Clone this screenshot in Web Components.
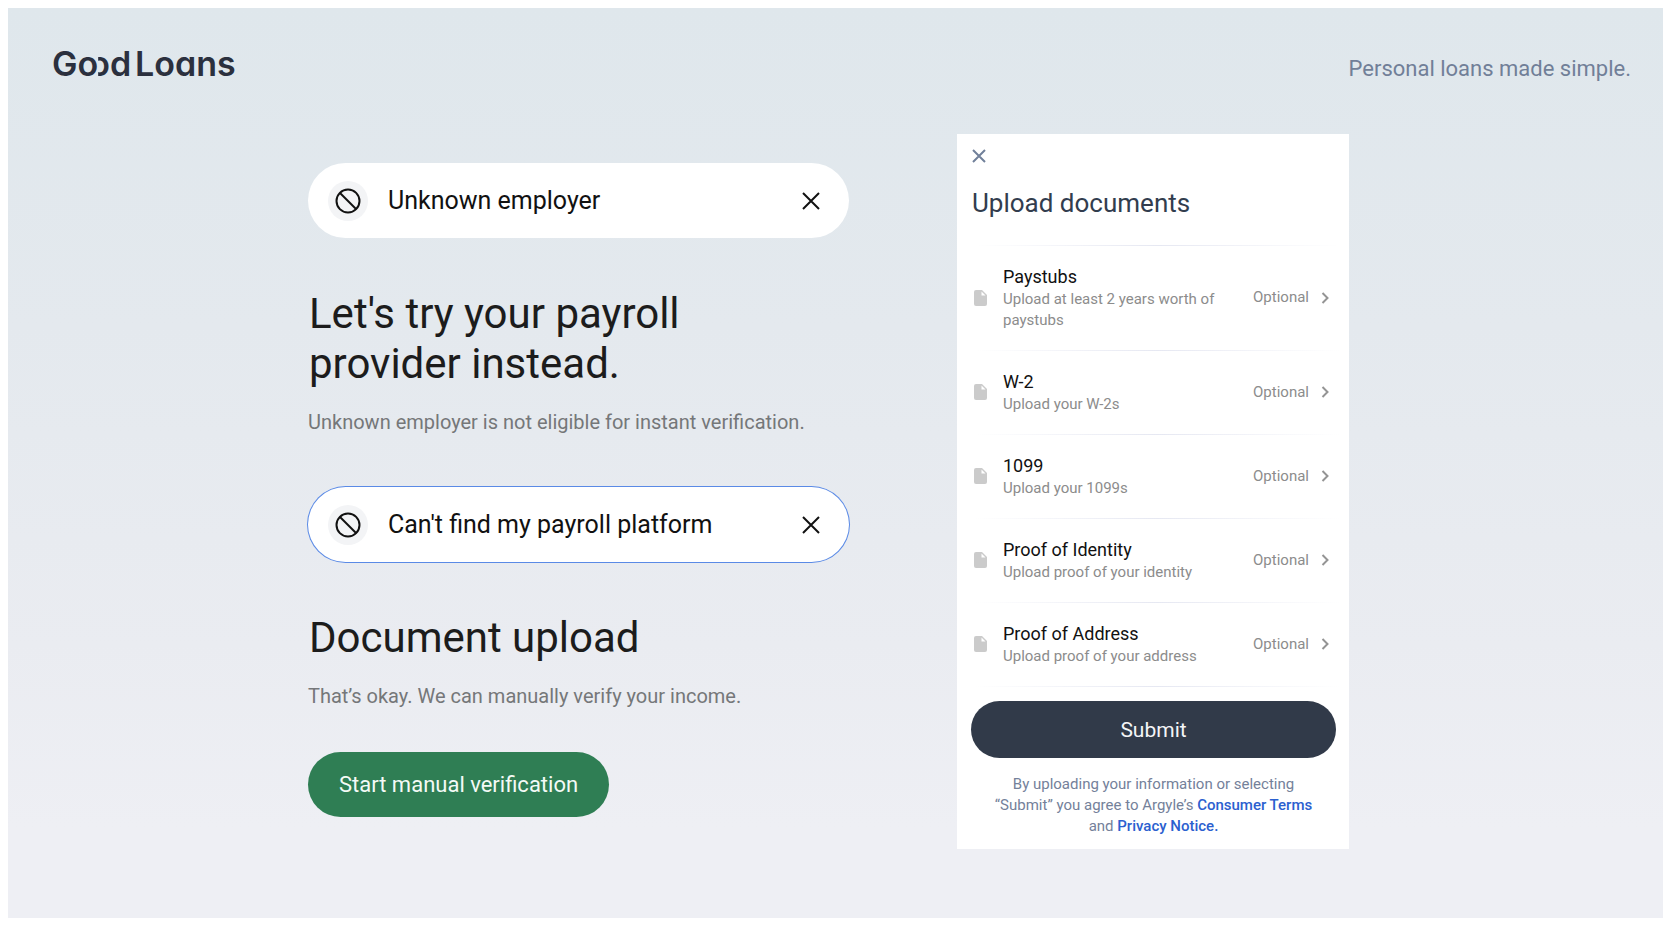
<!DOCTYPE html>
<html lang="en">
<head>
<meta charset="utf-8">
<meta name="viewport" content="width=device-width, initial-scale=1">
<title>Good Loans</title>
<style>
  body { margin: 0; background: #fff; font-family: Roboto, "Liberation Sans", sans-serif; color: #1c1c1c; }
</style>
</head>
<body>
<loan-page>
  <brand-logo slot="brand"></brand-logo>
  <span slot="tagline">Personal loans made simple.</span>

  <step-block slot="steps" level="1">
    <choice-field slot="field" label="Employer" value="Unknown employer"></choice-field>
    <span slot="title">Let's try your payroll<br>provider instead.</span>
    <span slot="note">Unknown employer is not eligible for instant verification.</span>
  </step-block>
  <step-block slot="steps" level="2">
    <choice-field slot="field" label="Payroll platform" value="Can't find my payroll platform" selected></choice-field>
    <span slot="title">Document upload</span>
    <span slot="note">That’s okay. We can manually verify your income.</span>
  </step-block>
  <pill-button slot="steps" class="start">Start manual verification</pill-button>

  <upload-card slot="card">
    <span slot="title">Upload documents</span>
    <document-row name="Paystubs">Upload at least 2 years worth of paystubs</document-row>
    <document-row name="W-2">Upload your W-2s</document-row>
    <document-row name="1099">Upload your 1099s</document-row>
    <document-row name="Proof of Identity">Upload proof of your identity</document-row>
    <document-row name="Proof of Address">Upload proof of your address</document-row>
  </upload-card>
</loan-page>

<script>
const define = (name, html, setup) => {
  const template = document.createElement('template');
  template.innerHTML = html;
  customElements.define(name, class extends HTMLElement {
    connectedCallback() {
      if (this.shadowRoot) return;
      this.attachShadow({ mode: 'open' }).append(template.content.cloneNode(true));
      if (setup) setup(this, this.shadowRoot);
    }
  });
};

define('loan-page', `
  <style>
    :host { display: block; box-sizing: border-box; min-height: 100vh; padding: 8px; }
    .panel { box-sizing: border-box; min-height: calc(100vh - 16px); padding: 36px 32px 40px 44px;
             background: linear-gradient(#dfe7ec, #e4e9ee 35%, #eaecf1 70%, #eeeff4 90%); }
    header { display: flex; align-items: baseline; justify-content: space-between; margin-bottom: 49px; }
    .tagline { font-size: 22px; line-height: 32px; color: #717f98; }
    main { display: grid; grid-template-columns: minmax(0, 541px) minmax(0, 392px); justify-content: center;
           align-items: start; gap: 108px; padding-right: 26px; }
    .steps { display: flex; flex-direction: column; align-items: stretch; gap: 51px; padding-top: 29px; }
    ::slotted(.start) { align-self: flex-start; margin-top: -9px; }
  </style>
  <div class="panel">
    <header><slot name="brand"></slot><div class="tagline"><slot name="tagline"></slot></div></header>
    <main>
      <div class="steps"><slot name="steps"></slot></div>
      <slot name="card"></slot>
    </main>
  </div>`);

define('brand-logo', `
  <style>
    :host { display: block; font: 600 34px/40px Inter, sans-serif; font-feature-settings: "cv11"; color: #2b303e; white-space: nowrap; }
    a { color: inherit; text-decoration: none; display: flex; align-items: baseline; gap: 4px; }
    /* The second "o" of the wordmark is open on its left side. */
    .open { display: inline-block; margin-left: -9px; clip-path: inset(0 0 0 9px); }
  </style>
  <a href="#" aria-label="Good Loans"><span>Go<span class="open">o</span>d</span> <span>Loans</span></a>`);

define('choice-field', `
  <style>
    :host { display: flex; align-items: center; box-sizing: border-box; height: 75px; padding: 0 28px 0 20px;
            border-radius: 38px; background: #fff; color: #111; }
    :host([selected]) { box-shadow: 0 0 0 1px #5a8ae6; }
    .badge { display: grid; place-items: center; flex: none; width: 40px; height: 40px; border-radius: 50%; background: #f3f4f6; }
    input { flex: 1; min-width: 0; margin: 0 18px 0 20px; padding: 0; border: 0; outline: 0; background: none;
            font: inherit; font-size: 25px; line-height: 32px; color: inherit; }
    button { display: flex; padding: 0; border: 0; background: none; color: inherit; cursor: pointer; }
    svg { display: block; fill: none; stroke: currentColor; stroke-width: 2; }
  </style>
  <span class="badge"><svg width="26" height="26" viewBox="0 0 26 26" aria-hidden="true"><circle cx="13" cy="13" r="11.5"/><path d="M5 5l16 16"/></svg></span>
  <input type="text" readonly>
  <button type="button" aria-label="Clear"><svg width="20" height="20" viewBox="0 0 20 20"><path d="M2 2l16 16M18 2L2 18"/></svg></button>`,
  (host, root) => {
    const input = root.querySelector('input');
    input.value = host.getAttribute('value');
    input.setAttribute('aria-label', host.getAttribute('label'));
  });

define('step-block', `
  <style>
    :host { display: block; }
    h1, h2 { margin: 51px 0 19px 1px; font-size: 42px; line-height: 50px; font-weight: 400; }
    p { margin: 0; font-size: 20px; line-height: 28px; color: #757779; }
  </style>
  <slot name="field"></slot>
  <h2><slot name="title"></slot></h2>
  <p><slot name="note"></slot></p>`,
  (host, root) => {
    if (host.getAttribute('level') !== '1') return;
    const h1 = document.createElement('h1');
    const h2 = root.querySelector('h2');
    h1.append(...h2.childNodes);
    h2.replaceWith(h1);
  });

define('pill-button', `
  <style>
    :host { display: block; }
    button { height: 65px; padding: 0 31px; border: 0; border-radius: 33px; background: #2f7e54; color: #f4faf6;
             font: inherit; font-size: 22px; line-height: 32px; cursor: pointer; }
    :host([wide]) button { width: 100%; height: 57px; background: #313a49; color: #f4f5f7; font-size: 21px; }
  </style>
  <button type="button"><slot></slot></button>`);

define('document-row', `
  <style>
    :host { display: block; }
    button { display: flex; align-items: center; box-sizing: border-box; width: 100%; padding: 18px 7px 19px 3px; border: 0;
             background: none; font: inherit; font-size: 15px; line-height: 21px; color: #8c8c8c; text-align: left; cursor: pointer; }
    .text { flex: 1; min-width: 0; margin: 0 12px 0 16px; }
    .name, .desc { display: block; }
    .name { font-size: 18px; line-height: 25px; color: #111; }
    .rule { height: 1px; margin: 0 -4px 0 4px; background: linear-gradient(90deg, transparent, #e6e8f2 50%, transparent); }
    svg { display: block; flex: none; }
    .chevron { margin-left: 12px; fill: none; stroke: #949494; stroke-width: 2; }
  </style>
  <button type="button">
    <svg width="13" height="16" viewBox="0 0 13 16" aria-hidden="true"><path fill="#cbcbcb" d="M2 0h6l5 5v9a2 2 0 0 1-2 2H2a2 2 0 0 1-2-2V2a2 2 0 0 1 2-2z"/><path fill="#fff" d="M7.5 1.5L11.5 5.5H7.5z"/></svg>
    <span class="text"><span class="name"></span><span class="desc"><slot></slot></span></span>
    <span>Optional</span>
    <svg class="chevron" width="8" height="12" viewBox="0 0 8 12" aria-hidden="true"><path d="M1.5 1l5 5-5 5"/></svg>
  </button>
  <div class="rule"></div>`,
  (host, root) => { root.querySelector('.name').textContent = host.getAttribute('name'); });

define('upload-card', `
  <style>
    :host { display: block; box-sizing: border-box; padding: 11px 13px 12px 14px; background: #fff; }
    .close { display: flex; align-items: center; height: 22px; padding: 0 1px; border: 0; background: none; color: #71809a; cursor: pointer; }
    .close svg { fill: none; stroke: currentColor; stroke-width: 2; }
    h2 { margin: 20px 0 26px 1px; font-size: 26px; line-height: 32px; font-weight: 400; color: #323d4e; }
    .rule { height: 1px; margin: 0 -4px 0 4px; background: linear-gradient(90deg, transparent, #e6e8f2 50%, transparent); }
    pill-button { margin-top: 14px; }
    p { margin: 16px 14px 0; font-size: 15px; line-height: 21px; text-align: center; color: #74819a; }
    a { color: #2b60cf; font-weight: 500; text-decoration: none; }
  </style>
  <button class="close" type="button" aria-label="Close"><svg width="14" height="14" viewBox="0 0 14 14"><path d="M1 1l12 12M13 1L1 13"/></svg></button>
  <h2><slot name="title"></slot></h2>
  <div class="rule"></div>
  <slot></slot>
  <pill-button wide>Submit</pill-button>
  <p>By uploading your information or selecting “Submit” you agree to Argyle’s <a href="#">Consumer Terms</a> and <a href="#">Privacy Notice.</a></p>`);
</script>
</body>
</html>
